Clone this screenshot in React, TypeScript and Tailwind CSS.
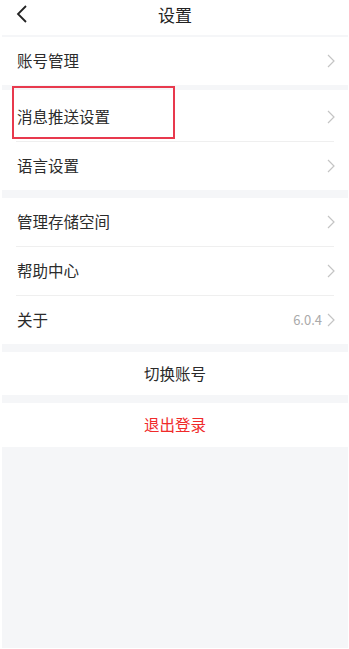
import React from 'react';

const font = { fontFamily: '"Noto Sans CJK SC", "Noto Sans", sans-serif' };

const Chevron: React.FC = () => (
  <svg width="8" height="14" viewBox="0 0 8 14" className="shrink-0">
    <polyline points="1,1 7,7 1,13" fill="none" stroke="#c4c4c4" strokeWidth="1.2" />
  </svg>
);

interface RowProps {
  label: string;
  extra?: string;
  height: string;
  divider?: boolean;
}

const Row: React.FC<RowProps> = ({ label, extra, height, divider }) => (
  <div className={`bg-white ${height} flex flex-col`}>
    <div className="flex flex-1 items-center pl-[15px] pr-[13px]">
      <span className="flex-1 text-[15.5px] text-[#2b2b2b]">{label}</span>
      {extra && <span className="mr-[5px] text-[13px] text-[#aaaaaa]">{extra}</span>}
      <Chevron />
    </div>
    {divider && <div className="mx-[14px] h-px bg-[#efefef]" />}
  </div>
);

export default function App() {
  return (
    <div className="w-[349px] h-[649px] bg-white pl-[2px] pr-px pb-px" style={font}>
      <div className="relative flex h-full flex-col bg-[#f5f6f8]">
        <div className="relative flex h-[35px] items-center justify-center bg-white pb-[5px]">
          <svg width="12" height="18" viewBox="0 0 12 18" className="absolute left-[14px] top-[5px]">
            <polyline points="10,1 2,9 10,17" fill="none" stroke="#222" strokeWidth="1.8" />
          </svg>
          <span className="text-[17px] text-[#222]">设置</span>
        </div>
        <div className="h-[2px]" />
        <Row label="账号管理" height="h-[48px]" />
        <div className="h-[5px]" />
        <Row label="消息推送设置" height="h-[52px] pt-[3px]" divider />
        <Row label="语言设置" height="h-[48px]" />
        <div className="h-[8px]" />
        <Row label="管理存储空间" height="h-[49px]" divider />
        <Row label="帮助中心" height="h-[49px]" divider />
        <Row label="关于" extra="6.0.4" height="h-[48px]" />
        <div className="h-[8px]" />
        <div className="flex h-[43px] items-center justify-center bg-white text-[15.5px] text-[#2b2b2b]">切换账号</div>
        <div className="h-[8px]" />
        <div className="flex h-[44px] items-center justify-center bg-white text-[15.5px] text-[#f02a2a]">退出登录</div>
        <div className="absolute left-[10px] top-[86px] h-[53px] w-[163px] border-2 border-[#e8394d]" />
      </div>
    </div>
  );
}
